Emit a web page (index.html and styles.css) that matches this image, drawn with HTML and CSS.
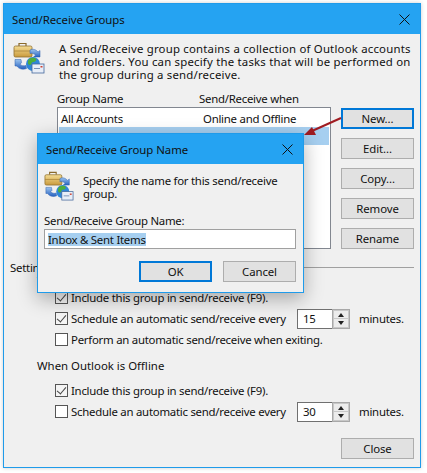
FILE: index.html
```html
<!DOCTYPE html>
<html lang="en">
<head>
  <meta charset="UTF-8" />
  <title>Send/Receive Groups</title>
  <link rel="stylesheet" href="styles.css">
</head>
<body>

  <div class="window">
    <div class="titlebar">
      <span>Send/Receive Groups</span>
      <svg class="close" viewBox="0 0 11 11"><path d="M0.5 0.5l10 10M10.5 0.5l-10 10"/></svg>
    </div>

    <div class="content">
      <div class="intro main-intro">
        <svg class="group-icon" viewBox="0 0 32 32">
          <use href="#sendreceive"/>
        </svg>
        <p>A Send/Receive group contains a collection of Outlook accounts and folders. You can specify the tasks that will be performed on the group during a send/receive.</p>
      </div>

      <div class="groups">
        <div class="groups-left">
          <div class="list-head"><span class="col-name">Group Name</span><span>Send/Receive when</span></div>
          <div class="list">
            <div class="row"><span class="col-name">All Accounts</span><span>Online and Offline</span></div>
            <div class="row selected"><span class="col-name">Today</span><span>Online and Offline</span></div>
          </div>
        </div>
        <div class="side-buttons">
          <button class="btn primary">New...</button>
          <button class="btn">Edit...</button>
          <button class="btn">Copy...</button>
          <button class="btn">Remove</button>
          <button class="btn">Rename</button>
        </div>
      </div>

      <div class="settings-head"><span>Setting for group "Today"</span><i></i></div>
      <div class="sub-head">When Outlook is Online</div>

      <div class="opt"><span class="check on"></span><span>Include this group in send/receive (F9).</span></div>
      <div class="opt">
        <span class="check on"></span><span class="opt-text">Schedule an automatic send/receive every</span>
        <span class="spin"><b>15</b><span class="arrows"><em class="up"></em><em class="down"></em></span></span>
        <span>minutes.</span>
      </div>
      <div class="opt"><span class="check"></span><span>Perform an automatic send/receive when exiting.</span></div>

      <div class="sub-head offline">When Outlook is Offline</div>

      <div class="opt"><span class="check on"></span><span>Include this group in send/receive (F9).</span></div>
      <div class="opt">
        <span class="check"></span><span class="opt-text">Schedule an automatic send/receive every</span>
        <span class="spin"><b>30</b><span class="arrows"><em class="up"></em><em class="down"></em></span></span>
        <span>minutes.</span>
      </div>

      <div class="footer"><button class="btn">Close</button></div>
    </div>
  </div>

  <!-- red pointer from the New button to the small dialog -->
  <svg class="pointer" viewBox="0 0 40 24">
    <path d="M37 3L8 16" stroke="#a01c22" stroke-width="2" fill="none"/>
    <path d="M0 20L8 12L12 20z" fill="#a01c22"/>
  </svg>

  <div class="name-dialog">
    <div class="titlebar">
      <span>Send/Receive Group Name</span>
      <svg class="close" viewBox="0 0 11 11"><path d="M0.5 0.5l10 10M10.5 0.5l-10 10"/></svg>
    </div>
    <div class="name-body">
      <div class="intro">
        <svg class="group-icon" viewBox="0 0 32 32">
          <use href="#sendreceive"/>
        </svg>
        <p>Specify the name for this send/receive group.</p>
      </div>
      <label class="name-label">Send/Receive Group Name:</label>
      <div class="name-input"><span>Inbox &amp; Sent Items</span></div>
      <div class="name-buttons">
        <button class="btn primary">OK</button>
        <button class="btn">Cancel</button>
      </div>
    </div>
  </div>

  <svg class="defs" width="0" height="0">
    <defs>
      <linearGradient id="bag" x1="0" y1="0" x2="0" y2="1">
        <stop offset="0" stop-color="#f4dc94"/>
        <stop offset="1" stop-color="#c99a3c"/>
      </linearGradient>
      <linearGradient id="arr" x1="0" y1="0" x2="0" y2="1">
        <stop offset="0" stop-color="#9cc4ee"/>
        <stop offset="1" stop-color="#2560c0"/>
      </linearGradient>
      <g id="sendreceive">
        <path d="M6 4V1.500h7V4" fill="none" stroke="#8a6a2c" stroke-width="1.200"/>
        <rect x="1" y="4" width="18" height="11" rx="1.500" fill="url(#bag)" stroke="#8f7030" stroke-width=".8"/>
        <path d="M1 9h18" stroke="#a88338" stroke-width=".8"/>
        <path d="M17 8c3-1.500 6-.5 8 2l2-1.500v6.500h-6.500l2-1.800c-1.500-1.700-3.500-2.200-5.500-1.700z" fill="url(#arr)" stroke="#2a5fae" stroke-width=".5"/>
        <path d="M2 17.500v6.500h1.800c2 3 6 4 9.700 2.500l-.5-3c-2.500.8-4.700 0-6-1.300l1.500-1.500-.5-3.200z" fill="url(#arr)" stroke="#2a5fae" stroke-width=".5"/>
        <circle cx="20" cy="22" r="7" fill="#2f86d8"/>
        <path d="M16 17c3-2 6-1.500 7 0s-1 3-3 3-1 3-3 3-3-3-1-6z" fill="#4cae3c"/>
        <rect x="19" y="22" width="12" height="9" fill="#e8eef8" stroke="#44689c" stroke-width=".8"/>
        <path d="M21 26.500h6" stroke="#7a92b8"/>
        <rect x="27.500" y="24" width="2" height="1.500" fill="#d04030"/>
      </g>
    </defs>
  </svg>

</body>
</html>
```

FILE: styles.css
```css
html, body {
  margin: 0;
  padding: 0;
}

body {
  position: relative;
  width: 427px;
  height: 473px;
  overflow: hidden;
  background-color: #fff;
  font-family: "Noto Sans", sans-serif;
  font-size: 11.4px;
  line-height: 13px;
  letter-spacing: -0.25px;
  color: #111;
}

.window {
  position: absolute;
  left: 3px;
  top: 3px;
  width: 418px;
  height: 465px;
  box-sizing: border-box;
  border: 1px solid #1f9bea;
  background-color: #f0f0f0;
  box-shadow: 0 0 4px rgba(0, 0, 0, 0.2);
  display: flex;
  flex-direction: column;
}

.titlebar {
  flex: none;
  height: 30px;
  background-color: #25a3f2;
  display: flex;
  align-items: center;
  justify-content: space-between;
  padding: 0 9px 0 8px;
  letter-spacing: -0.05px;
}

.close {
  width: 11px;
  height: 11px;
  margin-right: 1px;
}

.close path {
  stroke: #111;
  stroke-width: 1;
  fill: none;
}

.content {
  flex: 1;
  padding: 8px 6px 0 6px;
  display: flex;
  flex-direction: column;
}

.intro {
  display: flex;
}

.intro p {
  margin: 0;
}

.main-intro p {
  letter-spacing: 0.2px;
}

.group-icon {
  flex: none;
  width: 32px;
  height: 32px;
  margin: 0 14px 0 3px;
}

.groups {
  display: flex;
  margin-top: 11px;
  padding-left: 47px;
}

.groups-left {
  width: 274px;
}

.list-head {
  display: flex;
  height: 15px;
}

.col-name {
  width: 142px;
  flex: none;
}

.list {
  height: 142px;
  box-sizing: border-box;
  border: 1px solid #828790;
  background-color: #fff;
  padding: 1px;
}

.row {
  display: flex;
  height: 18px;
  align-items: center;
  padding-left: 2px;
}

.row.selected {
  background-color: #a6cff0;
}

.side-buttons {
  margin-left: 10px;
  display: flex;
  flex-direction: column;
  gap: 9px;
  padding-top: 16px;
}

.btn {
  width: 73px;
  height: 21px;
  padding: 0;
  box-sizing: border-box;
  border: 1px solid #adadad;
  background-color: #e1e1e1;
  font: inherit;
  letter-spacing: -0.1px;
  color: #111;
}

.btn.primary {
  border: 2px solid #0078d7;
}

.settings-head {
  display: flex;
  align-items: center;
  margin-top: 12px;
  height: 13px;
}

.settings-head i {
  flex: 1;
  height: 1px;
  margin: 0 0 0 6px;
  background-color: #a0a0a0;
}

.sub-head {
  margin-left: 27px;
  height: 13px;
  letter-spacing: 0;
}

.sub-head.offline {
  margin-top: 9px;
  margin-bottom: 8px;
}

.opt {
  display: flex;
  align-items: center;
  height: 21px;
  flex: none;
  padding-left: 45px;
  white-space: nowrap;
}

.opt-text {
  width: 226px;
}

.check {
  flex: none;
  width: 13px;
  height: 13px;
  box-sizing: border-box;
  border: 1px solid #555;
  background-color: #fff;
  margin-right: 3px;
  position: relative;
}

.check.on {
  background-color: #f4f4f4;
}

.check.on::after {
  content: "";
  position: absolute;
  left: 3px;
  top: 0;
  width: 4px;
  height: 8px;
  border: solid #444;
  border-width: 0 1.5px 1.5px 0;
  transform: rotate(40deg);
}

.spin {
  display: flex;
  width: 53px;
  height: 20px;
  margin-right: 9px;
}

.spin b {
  flex: 1;
  box-sizing: border-box;
  border: 1px solid #707070;
  border-right: none;
  background-color: #fff;
  font-weight: normal;
  padding-left: 5px;
  line-height: 18px;
}

.arrows {
  flex: none;
  width: 18px;
  display: flex;
  flex-direction: column;
  gap: 1px;
  box-sizing: border-box;
  border: 1px solid #a8a8a8;
  padding: 1px;
  background-color: #c8c8c8;
}

.arrows em {
  flex: 1;
  position: relative;
  background-color: #ececec;
}

.arrows em::after {
  content: "";
  position: absolute;
  left: 4px;
  top: 2px;
  border-left: 3px solid transparent;
  border-right: 3px solid transparent;
}

.arrows .up::after {
  border-bottom: 4px solid #222;
}

.arrows .down::after {
  border-top: 4px solid #222;
}

.footer {
  margin-top: auto;
  display: flex;
  justify-content: flex-end;
  padding-bottom: 8px;
}

.pointer {
  position: absolute;
  left: 304px;
  top: 115px;
  width: 40px;
  height: 24px;
}

.defs {
  position: absolute;
}

.name-dialog {
  position: absolute;
  left: 37px;
  top: 133px;
  width: 267px;
  height: 160px;
  box-sizing: border-box;
  border: 1px solid #1f9bea;
  background-color: #f0f0f0;
  box-shadow: 0 6px 18px rgba(0, 0, 0, 0.3);
  display: flex;
  flex-direction: column;
}

.name-body {
  padding: 7px 7px 0 6px;
}

.name-body .group-icon {
  margin: 0 9px 0 0;
  width: 30px;
  height: 30px;
}

.name-body .intro p {
  padding-top: 3px;
}

.name-label {
  display: block;
  margin-top: 13px;
  height: 15px;
}

.name-input {
  height: 20px;
  box-sizing: border-box;
  border: 1px solid #a0a0a0;
  background-color: #fff;
  padding: 3px 0 0 3px;
}

.name-input span {
  display: inline-block;
  background-color: #a6cff0;
}

.name-buttons {
  display: flex;
  justify-content: flex-end;
  gap: 11px;
  margin-top: 12px;
}
```
